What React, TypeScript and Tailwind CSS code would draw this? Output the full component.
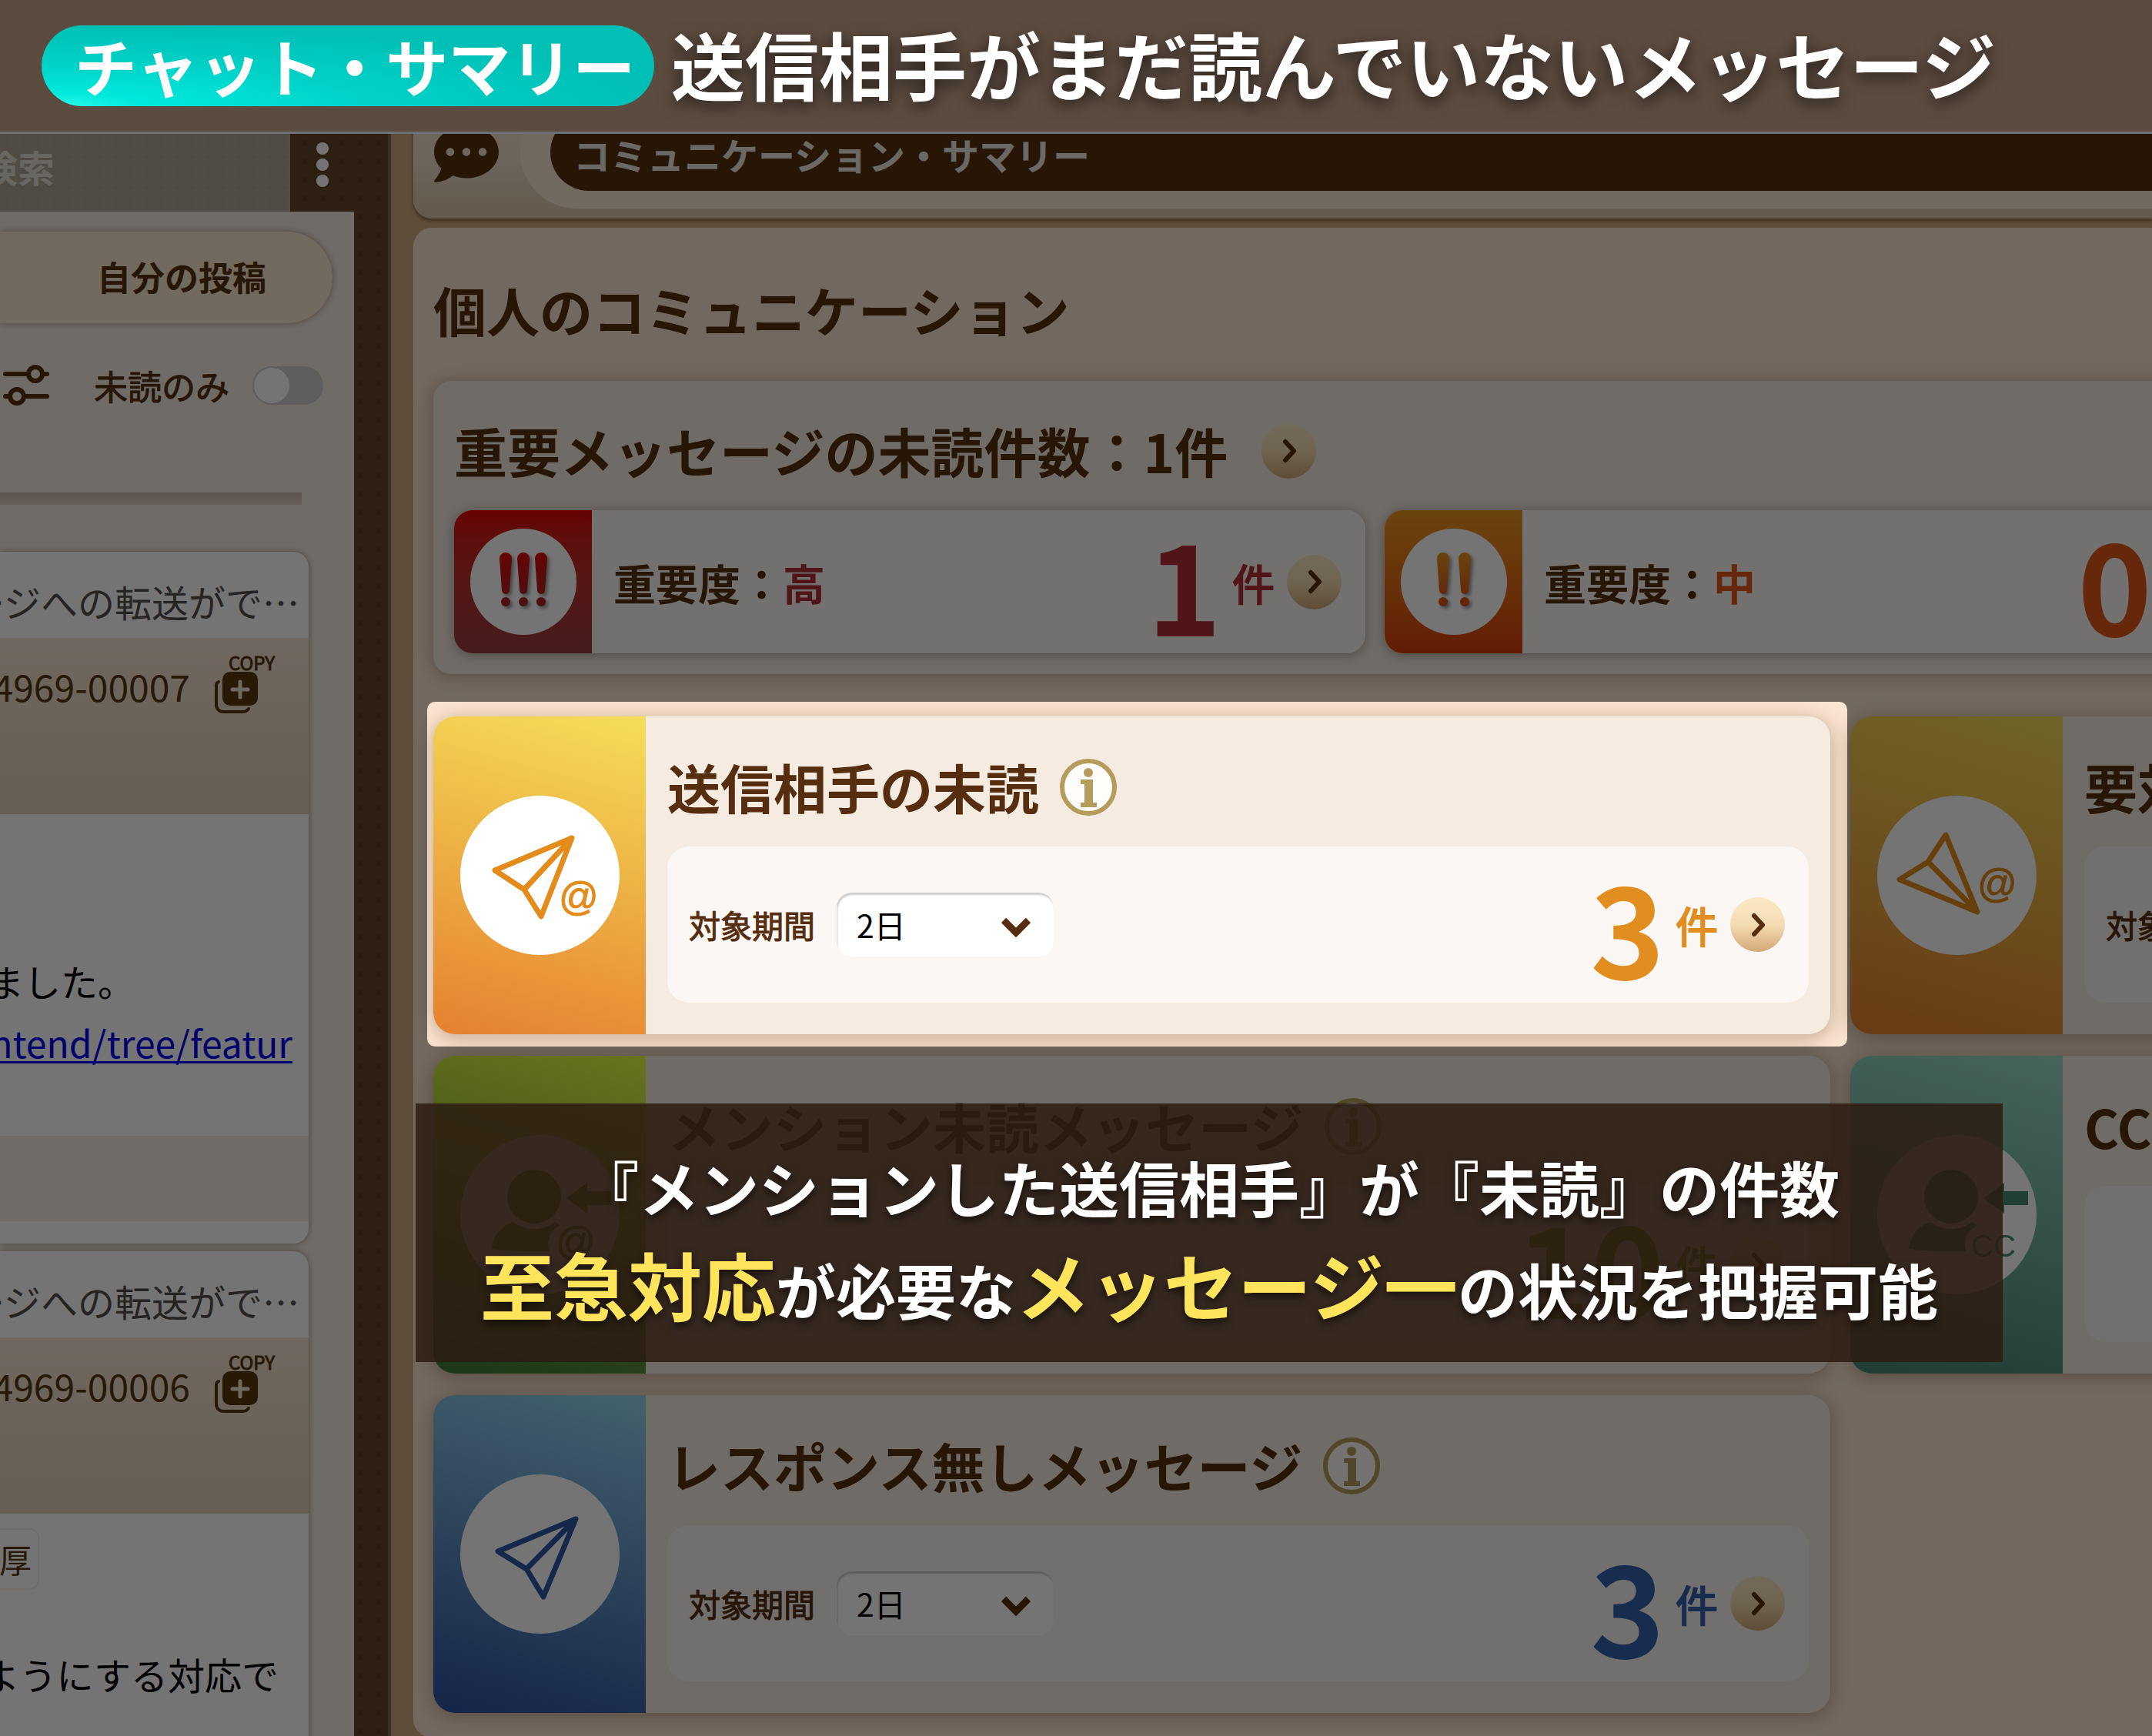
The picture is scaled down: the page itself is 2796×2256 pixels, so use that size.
import React, { useState } from 'react';
import { FaCommentDots } from 'react-icons/fa';

interface SummaryCardProps {
  id: string;
  title: string;
  count: string;
  iconBg: string;
  countColor: string;
  icon: React.ReactNode;
  hasPeriod?: boolean;
  highlighted?: boolean;
}

interface ImportanceCardProps {
  level: string;
  count: string;
  iconBg: string;
  textColor: string;
  marks: number;
  markFrom: string;
  markTo: string;
}

interface MessageCardProps {
  title: string;
  number: string;
  children: React.ReactNode;
}

/* ---------- Icons ---------- */

const AtMark = ({ x, y, color }: { x: number; y: number; color: string }) => (
  <text
    x={x}
    y={y}
    fill={color}
    stroke={color}
    strokeWidth="1"
    fontSize="51"
    textAnchor="middle"
    fontFamily="'Liberation Sans', sans-serif"
  >
    @
  </text>
);

const SentUnreadIcon = () => (
  <svg viewBox="0 0 207 207" className="size-full" fill="none" stroke="#e38c1c" strokeWidth="7" strokeLinejoin="round">
    <path d="M145 55 45 97l38 25 22 35z M83 122l62-67" />
    <AtMark x={154} y={149} color="#e38c1c" />
  </svg>
);

const ActionRequiredIcon = () => (
  <svg viewBox="0 0 207 207" className="size-full" fill="none" stroke="#e38c1c" strokeWidth="7" strokeLinejoin="round">
    <path d="M89 51 66 86l-37 23 101 42z M66 86l64 65" />
    <AtMark x={156} y={132} color="#e38c1c" />
  </svg>
);

const NoResponseIcon = () => (
  <svg viewBox="0 0 207 207" className="size-full" fill="none" stroke="#3057a6" strokeWidth="7" strokeLinejoin="round">
    <path d="M150 58 49 100l37 23 22 36z M86 123l64-65" />
  </svg>
);

const PersonArrow = ({ color }: { color: string }) => (
  <g fill={color}>
    <circle cx="96" cy="80" r="35" />
    <path d="M69 113c8 6 17 9 27 9s19-3 27-9c3 1 5 3 7 5-10 4-16 13-16 24 0 4 1 7 2 9-26 1-54 0-75-3 1-16 12-30 28-35z" />
    <path d="M138 82l27-20v11h31v18h-31v11z" />
  </g>
);

const MentionIcon = () => (
  <svg viewBox="0 0 207 207" className="size-full">
    <PersonArrow color="#5f8a1c" />
    <AtMark x={150} y={156} color="#5f8a1c" />
  </svg>
);

const CcIcon = () => (
  <svg viewBox="0 0 207 207" className="size-full">
    <PersonArrow color="#4b8b75" />
    <text x="151" y="158" fill="#4b8b75" fontSize="40" textAnchor="middle" fontFamily="'Liberation Sans', sans-serif">
      CC
    </text>
  </svg>
);

const InfoIcon = () => (
  <svg viewBox="0 0 76 76" className="size-[76px]">
    <circle cx="38" cy="38" r="34" fill="#fffdfa" stroke="#b39c5c" strokeWidth="6" />
    <circle cx="38" cy="19" r="6" fill="#b39c5c" />
    <path d="M28 28h16v30h5v6H28v-6h5V34h-5z" fill="#b39c5c" />
  </svg>
);

const CopyIcon = () => (
  <svg viewBox="0 0 56 56" className="size-14">
    <path d="M5 13a5 5 0 0 0-3 4v26a9 9 0 0 0 9 9h25a9 9 0 0 0 8-4" fill="none" stroke="#57380f" strokeWidth="4" strokeLinecap="round" />
    <rect x="10" y="0" width="46" height="44" rx="10" fill="#57380f" />
    <path d="M33 13v20M23 23h20" stroke="#f3e4d0" strokeWidth="5" strokeLinecap="round" />
  </svg>
);

const FilterIcon = () => (
  <svg viewBox="0 0 60 54" className="h-[54px] w-[60px]" fill="none" stroke="#562e0f" strokeWidth="6" strokeLinecap="round">
    <path d="M3 12h30M51 12h6M3 41h6M27 41h30" />
    <circle cx="42" cy="12" r="9" />
    <circle cx="18" cy="41" r="9" />
  </svg>
);

const ExclamationMarks = ({ count, from, to }: { count: number; from: string; to: string }) => {
  const gap = count === 3 ? 23 : 28;
  const start = 69 - ((count - 1) * gap) / 2;
  const gradientId = `marks-${count}`;
  return (
    <svg viewBox="0 0 138 138" className="size-full drop-shadow-[3px_3px_2px_rgba(0,0,0,0.4)]">
      <defs>
        <linearGradient id={gradientId} x1="0" y1="30" x2="0" y2="102" gradientUnits="userSpaceOnUse">
          <stop offset="0" stopColor={from} />
          <stop offset="1" stopColor={to} />
        </linearGradient>
      </defs>
      {Array.from({ length: count }).map((_, i) => {
        const x = start + i * gap;
        return (
          <g key={i} fill={`url(#${gradientId})`}>
            <path d={`M${x - 8} 39a8 8 0 0 1 16 0l-3 41a5 5 0 0 1-10 0z`} />
            <circle cx={x} cy="95" r="6" />
          </g>
        );
      })}
    </svg>
  );
};

/* ---------- Parts ---------- */

const ArrowButton = ({ label }: { label: string }) => (
  <button
    type="button"
    aria-label={label}
    className="flex size-[71px] shrink-0 items-center justify-center rounded-full bg-linear-to-b from-[#fbe9c6] via-[#f4dcb2] to-[#d3a878]"
  >
    <svg viewBox="0 0 20 32" className="h-8 w-5" fill="none" stroke="#562e0f" strokeWidth="6" strokeLinecap="round" strokeLinejoin="round">
      <path d="M5 4l11 12L5 28" />
    </svg>
  </button>
);

const CountLabel = ({ count, color }: { count: string; color: string }) => (
  <p className={`ml-auto flex items-center gap-[14px] pr-4 ${color}`}>
    <span className="text-[164px] leading-[186px] font-bold">{count}</span>
    <span className="text-[55px] [-webkit-text-stroke:2px_currentColor]">件</span>
  </p>
);

const ImportanceCard = ({ level, count, iconBg, textColor, marks, markFrom, markTo }: ImportanceCardProps) => (
  <article className="flex h-[186px] items-center rounded-[24px] bg-[#faf8f6] pr-[31px] shadow-[0_2px_16px_rgba(60,40,20,0.4)]">
    <div className={`flex h-full w-[179px] shrink-0 items-center justify-center rounded-l-[24px] ${iconBg}`}>
      <div className="size-[138px] rounded-full bg-white">
        <ExclamationMarks count={marks} from={markFrom} to={markTo} />
      </div>
    </div>
    <h4 className="pl-7 text-[55px] font-bold">
      重要度：<span className={textColor}>{level}</span>
    </h4>
    <CountLabel count={count} color={textColor} />
    <ArrowButton label={`重要度${level}を開く`} />
  </article>
);

const SummaryCard = ({ id, title, count, iconBg, countColor, icon, hasPeriod, highlighted }: SummaryCardProps) => {
  const [period, setPeriod] = useState('2');
  return (
    <article className="relative flex h-[413px] rounded-[28px] bg-[#f5ebe1] shadow-[0_4px_24px_rgba(80,50,20,0.35)]">
      <div className={`flex w-[276px] shrink-0 items-center justify-center rounded-l-[28px] ${iconBg}`}>
        <div className="size-[207px] rounded-full bg-white">{icon}</div>
      </div>
      <div className="flex flex-1 flex-col px-7 pt-[42px] pb-[41px]">
        <div className="flex h-[100px] items-center gap-[26px]">
          <h3 className="text-[69px] font-bold whitespace-nowrap">{title}</h3>
          <button type="button" aria-label={`${title}の説明`}>
            <InfoIcon />
          </button>
        </div>
        <div className="mt-auto flex h-[203px] items-center rounded-[28px] bg-[#fbf7f4] pr-[31px] pl-7">
          {hasPeriod && (
            <>
              <label htmlFor={id} className="text-[41px] whitespace-nowrap [-webkit-text-stroke:1px_currentColor]">
                対象期間
              </label>
              <div className="relative ml-7">
                <select
                  id={id}
                  value={period}
                  onChange={(e) => setPeriod(e.target.value)}
                  className="h-[83px] w-[282px] appearance-none rounded-[20px] bg-white pl-[26px] text-[41px] text-black shadow-[inset_1px_3px_2px_rgba(0,0,0,0.2)]"
                >
                  <option value="2">2日</option>
                  <option value="7">7日</option>
                </select>
                <svg viewBox="0 0 38 26" className="pointer-events-none absolute top-8 right-[30px] h-[26px] w-[38px]" fill="none" stroke="#562e0f" strokeWidth="9">
                  <path d="M3 4l16 16L35 4" />
                </svg>
              </div>
            </>
          )}
          <CountLabel count={count} color={countColor} />
          <ArrowButton label={`${title}を開く`} />
        </div>
      </div>
      {/* Spotlight: dims everything outside of this card */}
      {highlighted && (
        <div className="pointer-events-none absolute -top-[19px] -right-[22px] -bottom-4 -left-2 z-10 rounded-[10px] shadow-[0_0_0_4000px_rgba(0,0,0,0.545)]" />
      )}
    </article>
  );
};

const MessageCard = ({ title, number, children }: MessageCardProps) => (
  <article className="w-[401px] overflow-hidden rounded-r-[20px] bg-white shadow-[0_0_8px_rgba(80,50,20,0.5)]">
    <h3 className="flex h-28 items-center justify-end pt-4 pr-3 text-[48px] whitespace-nowrap text-[#55504c]">{title}</h3>
    <div className="flex h-[229px] items-start justify-end bg-linear-to-b from-[#f5e4d2] to-[#e2cfb8] pr-[44px] text-[#57380f]">
      <span className="shrink-0 pt-[30px] pr-8 text-[48px] leading-[64px] whitespace-nowrap">{number}</span>
      <button type="button" className="flex w-[78px] shrink-0 flex-col items-start pt-5">
        <span className="self-end text-[24px] leading-6 [-webkit-text-stroke:1px_currentColor]">COPY</span>
        <CopyIcon />
      </button>
    </div>
    {children}
  </article>
);

/* ---------- Page sections ---------- */

const Sidebar = () => (
  <aside className="flex w-[504px] shrink-0 flex-col overflow-hidden bg-[#634629] bg-[radial-gradient(#573b20_2px,transparent_4px)] bg-[length:24px_24px]">
    <div className="flex h-[101px] shrink-0 items-center">
      <button type="button" className="flex h-full w-[377px] items-center justify-end bg-[#b0a697] bg-[radial-gradient(#a99f90_2px,transparent_4px)] bg-[length:20px_20px] pr-[306px] pb-[18px] text-[48px] font-bold whitespace-nowrap text-[#e4e0da]">
        検索
      </button>
      <button type="button" aria-label="メニュー" className="flex w-[83px] flex-col items-center gap-[5px] pb-[22px]">
        <span className="size-4 rounded-full bg-white" />
        <span className="size-4 rounded-full bg-white" />
        <span className="size-4 rounded-full bg-white" />
      </button>
    </div>
    <div className="flex w-[460px] flex-1 shrink-0 flex-col bg-[#f5ede5]">
      <button
        type="button"
        className="mt-[26px] flex h-[119px] w-[432px] shrink-0 items-center justify-end rounded-r-full bg-[#fae6d1] pr-[86px] pb-1 text-[44px] font-bold shadow-[0_0_10px_rgba(80,60,40,0.5)]"
      >
        自分の投稿
      </button>
      <div className="mt-[54px] flex h-[54px] w-[420px] shrink-0 items-center justify-between pl-1">
        <button type="button" aria-label="絞り込み">
          <FilterIcon />
        </button>
        <label className="flex items-center gap-[30px] text-[44px]">
          <span className="[-webkit-text-stroke:1px_currentColor]">未読のみ</span>
          <input
            type="checkbox"
            className="h-[50px] w-[92px] appearance-none rounded-full bg-[#cfcfcf] before:block before:size-[50px] before:rounded-full before:border-2 before:border-[#cfcfcf] before:bg-white checked:before:ml-auto"
          />
        </label>
      </div>
      <hr className="mt-28 h-4 w-[392px] shrink-0 border-0 bg-linear-to-b from-[#cdb9a8] to-[#e0d2c6]" />
      <div className="mt-[61px] flex flex-col gap-[10px]">
        <MessageCard title="ージへの転送がで…" number="4969-00007">
          <div className="h-[418px] pt-[176px] text-[48px] leading-[80px] whitespace-nowrap text-black">
            <p className="flex w-[175px] justify-end">ました。</p>
            <a href="#tree" className="flex w-[380px] justify-end text-[#0000ee]">
              <span className="underline decoration-3 underline-offset-4">ntend/tree/featur</span>
            </a>
          </div>
          <div className="mb-[29px] h-[111px] bg-[#f5ece3]" />
        </MessageCard>
        <MessageCard title="ージへの転送がで…" number="4969-00006">
          <div className="h-[418px] pt-[19px] text-[48px] leading-[80px] whitespace-nowrap text-black">
            <span className="flex h-20 w-[51px] items-center justify-end rounded-r-xl border-2 border-l-0 border-[#f3eee9] pr-2 text-[42px] text-[#57380f]">
              厚
            </span>
            <p className="mt-[69px] flex w-[362px] justify-end">ようにする対応で</p>
          </div>
        </MessageCard>
      </div>
    </div>
  </aside>
);

const MainPanel = () => (
  <main className="min-w-0 flex-1 border-l-4 border-[#82695a] bg-[#cfa980] pl-[29px]">
    {/* Bar is scrolled partly under the title banner */}
    <div className="-mt-[49px] flex h-[159px] items-start rounded-bl-[24px] bg-linear-to-b from-[#f6e6d4] via-[#f0dfcb] to-[#dac3a6] shadow-[0_3px_4px_rgba(80,50,20,0.6)]">
      <div className="flex w-[139px] shrink-0 pt-[33px] pl-[27px]">
        <FaCommentDots className="size-[84px] text-[#562e0f]" />
      </div>
      <div className="flex h-[146px] flex-1 items-center rounded-l-full bg-[#fae6d5] pl-[39px]">
        <h1 className="flex h-[100px] flex-1 items-center rounded-l-full bg-[#562e0f] pt-1 pl-[30px] text-[48px] font-bold text-[#ece6e0]">
          コミュニケーション・サマリー
        </h1>
      </div>
    </div>

    <section className="mt-3 w-max rounded-[24px] bg-[#fae5d0] px-[26px] pt-[56px] pb-8">
      <h2 className="h-[100px] text-[69px] leading-[100px] font-bold">個人のコミュニケーション</h2>
      <div className="mt-[43px] rounded-[24px] bg-[#f5ece3] px-[27px] pt-[41px] pb-[27px] shadow-[0_2px_24px_rgba(80,50,20,0.35)]">
        <div className="flex h-[100px] items-center gap-[44px]">
          <h3 className="text-[69px] font-bold">重要メッセージの未読件数：1件</h3>
          <ArrowButton label="重要メッセージを開く" />
        </div>
        <div className="mt-[27px] grid grid-cols-3 gap-[25px]">
          <ImportanceCard
            level="高"
            count="1"
            marks={3}
            iconBg="bg-linear-to-b from-[#de0505] to-[#983c40]"
            textColor="text-[#ad3036]"
            markFrom="#dc0a0a"
            markTo="#a4262a"
          />
          <ImportanceCard
            level="中"
            count="0"
            marks={2}
            iconBg="bg-linear-to-b from-[#eb9622] to-[#d83c0a]"
            textColor="text-[#e0561a]"
            markFrom="#eb9622"
            markTo="#d8480e"
          />
        </div>
      </div>

      <div className="mt-[55px] grid grid-cols-[1815px_1815px] gap-x-[26px] gap-y-7">
        <SummaryCard
          id="period-sent"
          title="送信相手の未読"
          count="3"
          iconBg="bg-linear-[15deg] from-[#e5802f] to-[#f5de58]"
          countColor="text-[#e28d1f]"
          icon={<SentUnreadIcon />}
          hasPeriod
          highlighted
        />
        <SummaryCard
          id="period-action"
          title="要対応メッセージ"
          count="0"
          iconBg="bg-linear-[15deg] from-[#e5802f] to-[#f5de58]"
          countColor="text-[#e28d1f]"
          icon={<ActionRequiredIcon />}
          hasPeriod
        />
        <SummaryCard
          id="period-mention"
          title="メンション未読メッセージ"
          count="10"
          iconBg="bg-linear-[15deg] from-[#3a7638] to-[#e8ff40]"
          countColor="text-[#7a9a1e]"
          icon={<MentionIcon />}
        />
        <SummaryCard
          id="period-cc"
          title="CC未読メッセージ"
          count="0"
          iconBg="bg-linear-[15deg] from-[#4a8570] to-[#98dcc8]"
          countColor="text-[#4b8b75]"
          icon={<CcIcon />}
        />
        <SummaryCard
          id="period-response"
          title="レスポンス無しメッセージ"
          count="3"
          iconBg="bg-linear-[15deg] from-[#2f509f] to-[#94d6ee]"
          countColor="text-[#3561b0]"
          icon={<NoResponseIcon />}
          hasPeriod
        />
      </div>
    </section>
  </main>
);

export default function App() {
  return (
    <div className="flex h-screen flex-col overflow-hidden font-['Noto_Sans_CJK_JP',sans-serif] text-[#562e0f]">
      {/* Title banner */}
      <header className="relative z-30 flex h-[174px] shrink-0 items-center gap-[22px] border-b-3 border-[#6f7074] bg-[#5c4b3f] pl-[54px] font-bold whitespace-nowrap text-white">
        <span className="flex h-[105px] w-[796px] items-center rounded-full bg-[radial-gradient(ellipse_at_bottom_left,#2ffbe9_0%,#00e8dc_12%,#00d0c6_40%,#00c0b6_70%)] pb-1 pl-[43px] text-[81px]">
          チャット・サマリー
        </span>
        <span className="pb-2 text-[96px] leading-[130px] text-shadow-[0_6px_20px_rgba(0,0,0,0.6)]">
          送信相手がまだ読んでいないメッセージ
        </span>
      </header>

      <div className="relative flex min-h-0 flex-1">
        <Sidebar />
        <MainPanel />

        {/* Caption */}
        <div className="absolute top-[1260px] right-[194px] left-[540px] z-20 flex h-[336px] flex-col items-center justify-center bg-[rgba(44,28,17,0.86)] pt-3 text-[78px] leading-[126px] font-bold whitespace-nowrap text-white text-shadow-[0_5px_12px_rgba(0,0,0,0.6)]">
          <p>『メンションした送信相手』が『未読』の件数</p>
          <p>
            <em className="text-[96px] text-[#ffe45c] not-italic">至急対応</em>が必要な
            <em className="text-[96px] text-[#ffe45c] not-italic">メッセージ一</em>の状況を把握可能
          </p>
        </div>
      </div>
    </div>
  );
}
